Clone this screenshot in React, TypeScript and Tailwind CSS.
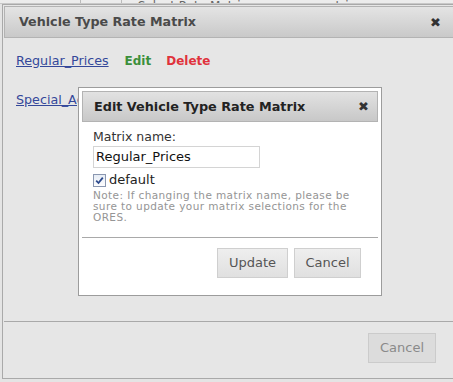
import React from "react";

const font = "font-['DejaVu_Sans','Liberation_Sans',sans-serif]";

function CloseX() {
  return <span className="text-[13px] leading-none text-[#333]">✖</span>;
}

function CheckBox() {
  return (
    <span className="flex h-[13px] w-[13px] items-center justify-center border border-[#8a97b0] bg-gradient-to-b from-[#e6ecf5] to-[#fdfdfe]">
      <svg width="9" height="9" viewBox="0 0 9 9">
        <path d="M1.2 4.6 L3.5 7 L7.8 1.6" fill="none" stroke="#2c4a8c" strokeWidth="1.8" />
      </svg>
    </span>
  );
}

export default function App() {
  return (
    <div className={`relative h-[382px] w-[453px] overflow-hidden bg-[#e4e4e4] ${font}`}>
      {/* page behind, only the bottom of a table row shows */}
      <div className="flex h-[4px] items-end overflow-hidden border-b border-[#c8c8c8] bg-[#ececec] text-[12px] leading-none text-[#666]">
        <div className="flex h-[14px] w-full items-end translate-y-[9px]">
          <span className="h-full w-[82px] border-r border-[#bbb]" />
          <span className="h-full w-[41px] border-r border-[#bbb]" />
          <span className="ml-[16px] w-[150px]">Select Rate Matrix</span>
          <span className="ml-[30px]">create new rate matrix</span>
        </div>
      </div>

      {/* main dialog */}
      <div className="absolute left-[2px] top-[4px] flex h-[375px] w-[470px] flex-col border border-[#a9a9a9] bg-[#e6e6e6] p-[1px]">
        <div className="flex h-[32px] shrink-0 items-center justify-between border border-[#b3b3b3] bg-gradient-to-b from-[#e4e4e4] to-[#c9c9c9] pl-[14px] pr-[28px]">
          <span className="text-[12.7px] font-bold text-[#4a4a4a]">Vehicle Type Rate Matrix</span>
          <CloseX />
        </div>
        <div className="flex flex-1 flex-col gap-[20px] px-[12px] pt-[13px] text-[13px]">
          <div className="flex items-baseline gap-[16px]">
            <a className="text-[12.7px] text-[#34489a] underline" href="#">Regular_Prices</a>
            <span className="text-[12px] font-bold text-[#3b8f3b]">Edit</span>
            <span className="-ml-[1px] text-[12px] font-bold text-[#e0323c]">Delete</span>
          </div>
          <div>
            <a className="text-[12.7px] text-[#34489a] underline" href="#">Special_Agreement</a>
          </div>
        </div>
        <div className="flex h-[56px] shrink-0 items-start justify-end border-t border-[#a9a9a9] pr-[34px] pt-[11px]">
          <button className="h-[30px] w-[68px] border border-[#cbcbcb] bg-[#dcdcdc] text-[13px] text-[#8a8a8a]">Cancel</button>
        </div>
      </div>

      {/* edit dialog */}
      <div className="absolute left-[78px] top-[87px] flex h-[209px] w-[304px] flex-col border border-[#9c9c9c] bg-white p-[3px]">
        <div className="flex h-[31px] shrink-0 items-center justify-between border border-[#b3b3b3] bg-gradient-to-b from-[#e2e2e2] to-[#c8c8c8] pl-[11px] pr-[8px]">
          <span className="text-[12.8px] font-bold text-[#222]">Edit Vehicle Type Rate Matrix</span>
          <CloseX />
        </div>
        <div className="flex flex-col px-[11px] pt-[7px]">
          <label className="text-[12.5px] leading-[16px] text-[#333]">Matrix name:</label>
          <div className="mt-[1px] flex h-[22px] w-[167px] items-center border border-[#d4d4d4] px-[2px] text-[13px] text-[#111]">
            Regular_Prices
          </div>
          <div className="mt-[4px] flex items-center gap-[3px] text-[13px] leading-[16px] text-[#222]">
            <CheckBox />
            <span>default</span>
          </div>
          <p className="mt-[2px] w-[270px] text-[10.5px] leading-[11px] tracking-[0.4px] text-[#959595]">
            Note: If changing the matrix name, please be sure to update your matrix selections for the ORES.
          </p>
        </div>
        <div className="mt-[14px] flex flex-1 items-start justify-end gap-[6px] border-t border-[#a9a9a9] pr-[17px] pt-[10px]">
          <button className="h-[30px] w-[71px] border border-[#cfcfcf] bg-gradient-to-b from-[#eeeeee] to-[#e0e0e0] text-[13px] text-[#555]">Update</button>
          <button className="h-[30px] w-[67px] border border-[#cfcfcf] bg-gradient-to-b from-[#eeeeee] to-[#e0e0e0] text-[13px] text-[#555]">Cancel</button>
        </div>
      </div>
    </div>
  );
}
